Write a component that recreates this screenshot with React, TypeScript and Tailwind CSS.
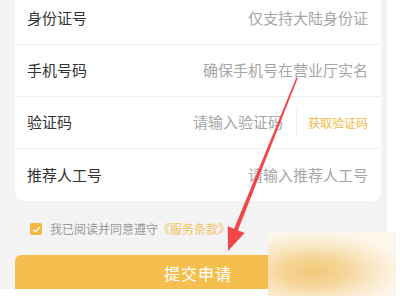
import React from 'react';

const rows = [
  { label: '身份证号', placeholder: '仅支持大陆身份证' },
  { label: '手机号码', placeholder: '确保手机号在营业厅实名认证' },
  { label: '验证码', placeholder: '请输入验证码', code: true },
  { label: '推荐人工号', placeholder: '请输入推荐人工号' },
];

const App: React.FC = () => {
  return (
    <div
      className="relative w-[400px] h-[300px] overflow-hidden bg-white"
      style={{ fontFamily: '"Noto Sans CJK SC", "Noto Sans", sans-serif' }}
    >
      <div className="w-[387px] h-[289px] bg-[#f3f3f3] overflow-hidden flex flex-col">
        {/* form card */}
        <div className="mx-[15px] w-[366px] -mt-[7px] bg-white rounded-b-lg flex flex-col">
          {rows.map((r, i) => (
            <div
              key={r.label}
              className={`h-[52px] flex items-center pl-[12px] pr-[13px] ${i < rows.length - 1 ? 'border-b border-[#f0f0f0]' : ''}`}
            >
              <span className="w-[100px] shrink-0 text-[15px] text-[#333]">{r.label}</span>
              {r.code ? (
                <div className="flex-1 flex items-center justify-end">
                  <span className="text-[15px] text-[#a6a6a6] pr-[13px]">{r.placeholder}</span>
                  <div className="w-px h-[30px] bg-[#f0f0f0]" />
                  <span className="pl-[11px] text-[12px] text-[#f3b943]">获取验证码</span>
                </div>
              ) : (
                <div className="ml-auto w-[165px] overflow-hidden whitespace-nowrap text-right text-[15px] text-[#a6a6a6]">
                  {r.placeholder}
                </div>
              )}
            </div>
          ))}
        </div>

        {/* agreement */}
        <div className="mt-[21px] ml-[30px] flex items-center h-[14px]">
          <div className="w-[12px] h-[12px] rounded-[2px] bg-[#f5b942] flex items-center justify-center">
            <svg width="9" height="9" viewBox="0 0 10 10">
              <path d="M1.5 5.2 L4 7.5 L8.5 2.5" fill="none" stroke="#fff" strokeWidth="1.4" />
            </svg>
          </div>
          <span className="ml-[8px] text-[12px] text-[#999]">
            我已阅读并同意遵守<span className="text-[#f3c15e]">《服务条款》</span>
          </span>
        </div>

        {/* submit */}
        <button className="mt-[19px] mx-[15px] w-[366px] h-[36px] shrink-0 rounded-t-md bg-[#f5bf4f] text-white text-[16px] tracking-[1px] flex items-center justify-center">
          提交申请
        </button>
      </div>

      {/* blurred watermark */}
      <div className="absolute left-[268px] top-[231px] w-[128px] h-[65px] bg-[radial-gradient(ellipse_70%_60%_at_35%_62%,#f2c878_0%,#f5d597_35%,#f9e7c4_65%,#fdf6ea_100%)]" />

      {/* red arrow */}
      <svg className="absolute left-0 top-0 pointer-events-none" width="400" height="300" viewBox="0 0 400 300">
        <polygon points="296.3,77.6 297.7,78.2 235.5,236.5 231.5,235" fill="#f0474a" />
        <polygon points="228,251 244.6,233 227.8,226.3" fill="#f0474a" />
      </svg>
    </div>
  );
};

export default App;
